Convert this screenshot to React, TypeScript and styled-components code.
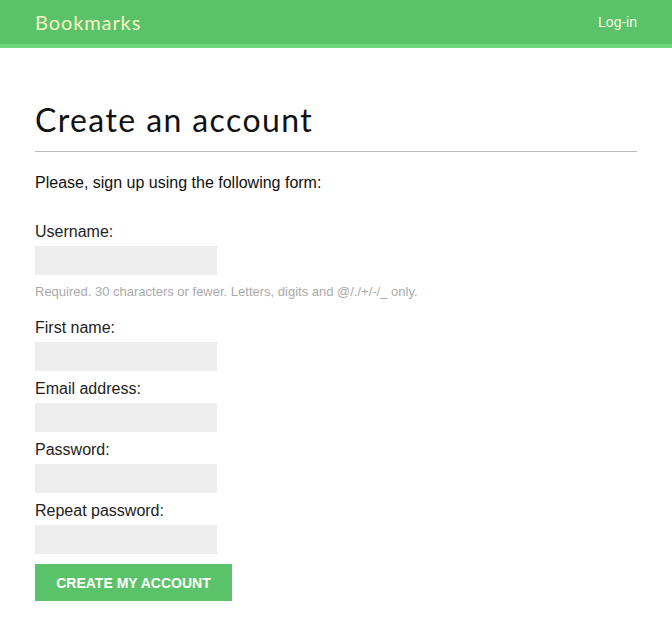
import React from 'react';
import styled, { createGlobalStyle } from 'styled-components';

const GlobalStyle = createGlobalStyle`
  body {
    margin: 0;
    background: #fff;
    font-family: "Liberation Sans", Arial, sans-serif;
    color: #333;
  }
`;

const fields = [
  { label: 'Username:', help: 'Required. 30 characters or fewer. Letters, digits and @/./+/-/_ only.' },
  { label: 'First name:' },
  { label: 'Email address:', type: 'email' },
  { label: 'Password:', type: 'password' },
  { label: 'Repeat password:', type: 'password' },
];

const App = () => (
  <>
    <GlobalStyle />
    <Header>
      <Logo>Bookmarks</Logo>
      <LoginLink href="#">Log-in</LoginLink>
    </Header>
    <Content>
      <Title>Create an account</Title>
      <Intro>Please, sign up using the following form:</Intro>
      <Form onSubmit={(e) => e.preventDefault()}>
        {fields.map((f) => (
          <Field key={f.label}>
            <Label>{f.label}</Label>
            <Input type={f.type || 'text'} />
            {f.help && <HelpText>{f.help}</HelpText>}
          </Field>
        ))}
        <Button type="submit">Create my account</Button>
      </Form>
    </Content>
  </>
);

const Header = styled.div`
  display: flex;
  justify-content: space-between;
  align-items: center;
  height: 44px;
  padding: 0 35px;
  background: #5ac36a;
  border-bottom: 4px solid #6cd87b;
`;

const Logo = styled.span`
  font-family: Lato, "Open Sans", sans-serif;
  font-size: 20px;
  color: #f7f5c2;
  letter-spacing: 0.9px;
`;

const LoginLink = styled.a`
  font-family: "Liberation Sans", Arial, sans-serif;
  font-size: 14px;
  color: #fbfbe6;
  text-decoration: none;
`;

const Content = styled.div`
  padding: 0 35px;
`;

const Title = styled.h1`
  margin: 54px 0 0;
  padding-bottom: 13px;
  border-bottom: 1px solid #bbb;
  font-family: Lato, "Open Sans", sans-serif;
  font-weight: 400;
  font-size: 32px;
  line-height: 36px;
  letter-spacing: 1.4px;
  color: #111;
`;

const Intro = styled.p`
  margin: 21px 0 0;
  font-size: 16px;
  line-height: 20px;
  color: #111;
`;

const Form = styled.form`
  display: flex;
  flex-direction: column;
  align-items: flex-start;
  margin-top: 29px;
`;

const Field = styled.div`
  display: flex;
  flex-direction: column;
  align-items: flex-start;
  margin-bottom: 8px;
`;

const Label = styled.label`
  font-size: 16px;
  line-height: 20px;
  color: #222;
  margin-bottom: 4px;
`;

const Input = styled.input`
  width: 182px;
  height: 29px;
  box-sizing: border-box;
  border: none;
  background: #eee;
  padding: 0 6px;
  font-size: 14px;
  outline: none;
`;

const HelpText = styled.span`
  margin: 10px 0 11px;
  font-size: 13px;
  line-height: 14px;
  color: #aaa;
`;

const Button = styled.button`
  margin-top: 2px;
  width: 197px;
  height: 37px;
  border: none;
  background: #5ac36a;
  color: #fff;
  font-family: "Liberation Sans", Arial, sans-serif;
  font-weight: bold;
  font-size: 14px;
  text-transform: uppercase;
  cursor: pointer;
`;

export default App;
